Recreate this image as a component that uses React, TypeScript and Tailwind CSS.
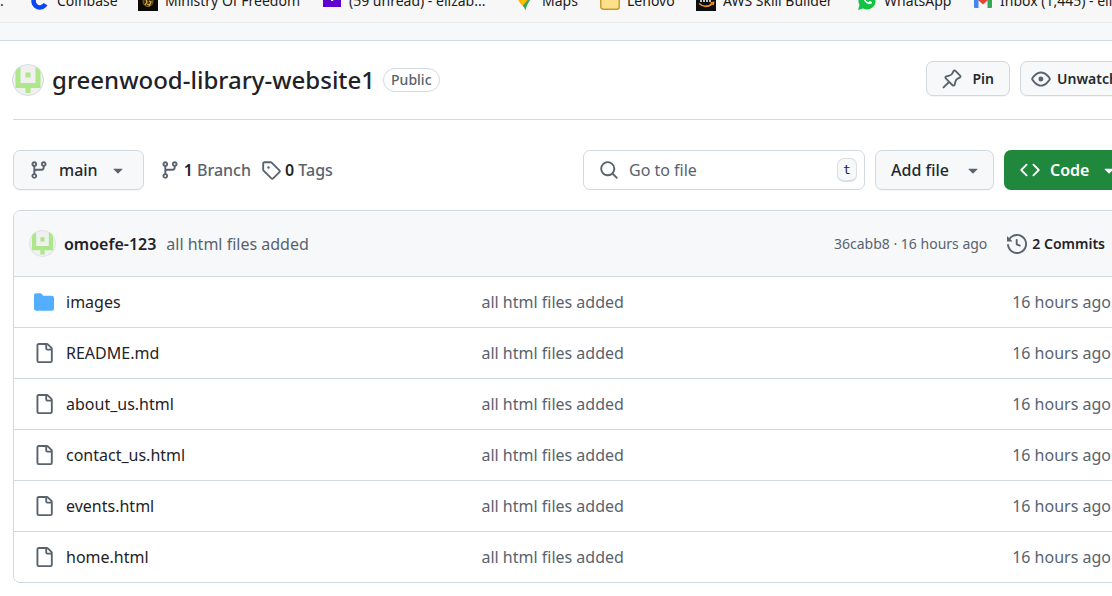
import React from "react";

const paths = {
  branch:
    "M9.5 3.25a2.25 2.25 0 1 1 3 2.122V6A2.5 2.5 0 0 1 10 8.5H6a1 1 0 0 0-1 1v1.128a2.251 2.251 0 1 1-1.5 0V5.372a2.25 2.25 0 1 1 1.5 0v1.836A2.493 2.493 0 0 1 6 7h4a1 1 0 0 0 1-1v-.628A2.25 2.25 0 0 1 9.5 3.25Zm-6 0a.75.75 0 1 0 1.5 0 .75.75 0 0 0-1.5 0Zm8.25-.75a.75.75 0 1 0 0 1.5.75.75 0 0 0 0-1.5ZM4.25 12a.75.75 0 1 0 0 1.5.75.75 0 0 0 0-1.5Z",
  tag: "M1 7.775V2.75C1 1.784 1.784 1 2.75 1h5.025c.464 0 .91.184 1.238.513l6.25 6.25a1.75 1.75 0 0 1 0 2.474l-5.026 5.026a1.75 1.75 0 0 1-2.474 0l-6.25-6.25A1.752 1.752 0 0 1 1 7.775Zm1.5 0c0 .066.026.13.073.177l6.25 6.25a.25.25 0 0 0 .354 0l5.025-5.025a.25.25 0 0 0 0-.354l-6.25-6.25a.25.25 0 0 0-.177-.073H2.75a.25.25 0 0 0-.25.25ZM6 5a1 1 0 1 1 0 2 1 1 0 0 1 0-2Z",
  search:
    "M10.68 11.74a6 6 0 0 1-7.922-8.982 6 6 0 0 1 8.982 7.922l3.04 3.04a.749.749 0 0 1-.326 1.275.749.749 0 0 1-.734-.215ZM11.5 7a4.499 4.499 0 1 0-8.997 0A4.499 4.499 0 0 0 11.5 7Z",
  eye: "M8 2c1.981 0 3.671.992 4.933 2.078 1.27 1.091 2.187 2.345 2.637 3.023a1.62 1.62 0 0 1 0 1.798c-.45.678-1.367 1.932-2.637 3.023C11.67 13.008 9.981 14 8 14c-1.981 0-3.671-.992-4.933-2.078C1.797 10.83.88 9.576.43 8.898a1.62 1.62 0 0 1 0-1.798c.45-.677 1.367-1.931 2.637-3.022C4.33 2.992 6.019 2 8 2ZM1.679 7.932a.12.12 0 0 0 0 .136c.411.622 1.241 1.75 2.366 2.717C5.176 11.758 6.527 12.5 8 12.5c1.473 0 2.825-.742 3.955-1.715 1.124-.967 1.954-2.096 2.366-2.717a.12.12 0 0 0 0-.136c-.412-.621-1.242-1.75-2.366-2.717C10.824 4.242 9.473 3.5 8 3.5c-1.473 0-2.825.742-3.955 1.715-1.124.967-1.954 2.096-2.366 2.717ZM8 10a2 2 0 1 1-.001-3.999A2 2 0 0 1 8 10Z",
  code: "m11.28 3.22 4.25 4.25a.75.75 0 0 1 0 1.06l-4.25 4.25a.749.749 0 0 1-1.275-.326.749.749 0 0 1 .215-.734L13.94 8l-3.72-3.72a.749.749 0 0 1 .326-1.275.749.749 0 0 1 .734.215Zm-6.56 0a.751.751 0 0 1 1.042.018.751.751 0 0 1 .018 1.042L2.06 8l3.72 3.72a.749.749 0 0 1-.326 1.275.749.749 0 0 1-.734-.215L.47 8.53a.75.75 0 0 1 0-1.06Z",
  history:
    "m.427 1.927 1.215 1.215a8.002 8.002 0 1 1-1.6 5.685.75.75 0 1 1 1.493-.154 6.5 6.5 0 1 0 1.18-4.458l1.358 1.358A.25.25 0 0 1 3.896 6H.25A.25.25 0 0 1 0 5.75V2.104a.25.25 0 0 1 .427-.177ZM7.75 4a.75.75 0 0 1 .75.75v2.992l2.028.812a.75.75 0 0 1-.557 1.392l-2.5-1A.751.751 0 0 1 7 8.25v-3.5A.75.75 0 0 1 7.75 4Z",
  file: "M2 1.75C2 .784 2.784 0 3.75 0h6.586c.464 0 .909.184 1.237.513l2.914 2.914c.329.328.513.773.513 1.237v9.586A1.75 1.75 0 0 1 13.25 16h-9.5A1.75 1.75 0 0 1 2 14.25Zm1.75-.25a.25.25 0 0 0-.25.25v12.5c0 .138.112.25.25.25h9.5a.25.25 0 0 0 .25-.25V6h-2.75A1.75 1.75 0 0 1 9 4.25V1.5Zm6.75.062V4.25c0 .138.112.25.25.25h2.688l-.011-.013-2.914-2.914-.013-.011Z",
  folder:
    "M1.75 1A1.75 1.75 0 0 0 0 2.75v10.5C0 14.216.784 15 1.75 15h12.5A1.75 1.75 0 0 0 16 13.25v-8.5A1.75 1.75 0 0 0 14.25 3H7.5a.25.25 0 0 1-.2-.1l-.9-1.2C6.07 1.26 5.55 1 5 1H1.75Z",
  caret:
    "m4.427 7.427 3.396 3.396a.25.25 0 0 0 .354 0l3.396-3.396A.25.25 0 0 0 11.396 7H4.604a.25.25 0 0 0-.177.427Z",
  pin: "m11.294.984 3.722 3.722a1.75 1.75 0 0 1-.504 2.826l-1.327.613a3.089 3.089 0 0 0-1.707 2.084l-.584 2.454c-.317 1.332-1.972 1.8-2.94.832L5.75 11.311 1.78 15.28a.749.749 0 1 1-1.06-1.06l3.969-3.97-2.204-2.204c-.968-.968-.5-2.623.832-2.94l2.454-.584a3.08 3.08 0 0 0 2.084-1.707l.613-1.327a1.75 1.75 0 0 1 2.826-.504ZM6.283 9.723l2.732 2.731a.25.25 0 0 0 .42-.119l.584-2.454a4.586 4.586 0 0 1 2.537-3.098l1.328-.613a.25.25 0 0 0 .072-.404l-3.722-3.722a.25.25 0 0 0-.404.072l-.613 1.328a4.584 4.584 0 0 1-3.098 2.537l-2.454.584a.25.25 0 0 0-.119.42l2.731 2.732Z",
};

function Icon({ name, className = "text-[#59636e]" }: { name: keyof typeof paths; className?: string }) {
  return (
    <svg viewBox="0 0 16 16" aria-hidden="true" className={`size-5 shrink-0 fill-current ${className}`}>
      <path d={paths[name]} />
    </svg>
  );
}

function Avatar({ className }: { className: string }) {
  return (
    <svg viewBox="0 0 32 32" aria-hidden="true" className={`shrink-0 rounded-full ${className}`}>
      <rect width="32" height="32" fill="#f0f0f0" />
      <path d="M3.500 3h5v16h15V3h5v21h-10v5h-5v-5h-10z" fill="#aee68a" />
      <path d="M13.500 8.500h5v5h-5z" fill="#aee68a" />
      <circle cx="16" cy="16" r="15.500" fill="none" stroke="#d9dde0" />
    </svg>
  );
}

const bookmarks = [
  {
    label: "Coinbase",
    width: "w-[108px]",
    icon: (
      <path d="M15.500 13.200a6.400 6.400 0 1 1 0-6.400" fill="none" stroke="#0a46f5" strokeWidth="4.500" />
    ),
  },
  {
    label: "Ministry Of Freedom",
    width: "w-[184px]",
    icon: (
      <>
        <rect width="20" height="20" fill="#0b0a06" />
        <circle cx="10" cy="10.500" r="5" fill="#3d2e08" stroke="#8a6b1c" />
        <path d="M7 14l2-3-1-2m3 6 2-4-2-1m-2 3 3 1" fill="none" stroke="#d8ae45" strokeWidth="1.300" />
      </>
    ),
  },
  {
    label: "(59 unread) - elizab...",
    width: "w-[193px]",
    icon: (
      <>
        <path d="M1 0h18v16H1z" fill="#6001d2" />
        <path d="M9 8h3l-1 2H9z" fill="#fff" />
      </>
    ),
  },
  {
    label: "Maps",
    width: "w-[85px]",
    icon: (
      <>
        <path d="M3 8c1 4 3.500 5 5.500 8L15 6V0H3z" fill="#fbbc04" />
        <path d="M17 3c0 6-5 8-6.500 16.500C10 18 9.500 17 8 14.500L16 5z" fill="#34a853" />
      </>
    ),
  },
  {
    label: "Lenovo",
    width: "w-[96px]",
    icon: <rect x=".75" y="1" width="18.500" height="17.250" rx="2.500" fill="#ffe08a" stroke="#c69a2c" strokeWidth="1.400" />,
  },
  {
    label: "AWS Skill Builder",
    width: "w-[161px]",
    icon: (
      <>
        <rect width="20" height="20" fill="#0c0d10" />
        <path d="M5 7v4m3-4v4m3-4v4m3-4v4" stroke="#fff" strokeWidth="1.500" />
        <path d="M3 12.500c4 3.500 9 3.500 13 .5m1 1 .5-2.500-3 .5" fill="none" stroke="#f29222" strokeWidth="1.600" />
      </>
    ),
  },
  {
    label: "WhatsApp",
    width: "w-[116px]",
    icon: (
      <>
        <path d="M1 19l1.500-5A8.500 8.500 0 1 1 6 17.500z" fill="#12c244" />
        <path
          d="M6.500 5.500c-1 4 3.500 8.500 7.500 7.500 1-.5 1.200-1.500.8-2l-2-1-1.300 1.200C10 10.800 9 9.800 8.500 8.500L9.500 7 8.500 5z"
          fill="#fff"
        />
      </>
    ),
  },
  {
    label: "Inbox (1,445) - elizab...",
    width: "w-[184px]",
    icon: (
      <>
        <path d="M1 4h4.500v13H2a1 1 0 0 1-1-1z" fill="#4285f4" />
        <path d="M14.500 4H19v12a1 1 0 0 1-1 1h-3.500z" fill="#34a853" />
        <path d="M5.500 4 10 8l4.500-4v5.500L10 13.500l-4.500-4z" fill="#ea4335" />
      </>
    ),
  },
];

const files = ["images", "README.md", "about_us.html", "contact_us.html", "events.html", "home.html"];

const button =
  "flex items-center rounded-[7px] border border-[#d1d9e0] bg-[#f6f8fa] text-[#25292e] shadow-[0_1px_0_rgba(31,35,40,0.04)]";

export default function App() {
  return (
    <div className="min-h-screen overflow-x-hidden bg-white font-['Noto_Sans','Open_Sans',sans-serif] text-base text-[#1f2328]">
      <nav
        aria-label="Bookmarks"
        className="flex h-[23px] items-end overflow-hidden border-b border-[#e6eaec] bg-[#f7f7f7] pb-[11px] text-sm text-[#1b1b1b]"
      >
        <span className="w-[30px] shrink-0 leading-5">.</span>
        {bookmarks.map((b) => (
          <a key={b.label} href="#" className={`flex h-5 shrink-0 items-center gap-[7px] whitespace-nowrap leading-5 ${b.width}`}>
            <svg viewBox="0 0 20 20" aria-hidden="true" className="size-5 shrink-0">
              {b.icon}
            </svg>
            {b.label}
          </a>
        ))}
      </nav>
      <div className="h-[18px] border-b border-[#d1d9e0] bg-[#f6f8fa]" />

      <main className="-mr-4 pl-[13px]">
        <header className="flex h-[79px] items-center gap-2 border-b border-[#d1d9e0]">
          <Avatar className="-ml-px size-8" />
          <h1 className="text-2xl font-medium">
            <a href="#">greenwood-library-website1</a>
          </h1>
          <span className="rounded-full border border-[#d1d9e0] px-[7px] text-sm leading-[22px] font-medium text-[#59636e]">Public</span>
          <div className="mt-5 ml-auto flex gap-2.5 self-start text-sm font-semibold">
            <button className={`${button} h-[35px] gap-2.5 px-[15px]`}>
              <Icon name="pin" />
              Pin
            </button>
            <button className={`${button} h-[35px] w-[108px] gap-1.5 px-2.5`}>
              <Icon name="eye" />
              Unwatch
            </button>
          </div>
        </header>

        <div className="mt-[30px] flex h-10 items-stretch gap-2.5">
          <button className={`${button} gap-2.5 px-[15px] font-medium`}>
            <Icon name="branch" />
            main
            <Icon name="caret" />
          </button>
          <a href="#" className="ml-1.5 flex items-center gap-1 font-medium text-[#59636e]">
            <Icon name="branch" />
            <span>
              <strong className="font-semibold text-[#1f2328]">1</strong> Branch
            </span>
          </a>
          <a href="#" className="flex items-center gap-1 font-medium text-[#59636e]">
            <Icon name="tag" />
            <span>
              <strong className="font-semibold text-[#1f2328]">0</strong> Tags
            </span>
          </a>
          <label className="ml-auto flex w-[282px] items-center gap-2.5 rounded-[7px] border border-[#d1d9e0] pr-[7px] pl-[15px]">
            <Icon name="search" />
            <input
              aria-label="Go to file"
              placeholder="Go to file"
              className="min-w-0 flex-1 bg-transparent outline-none placeholder:text-[#59636e]"
            />
            <kbd className="flex h-6 w-5 items-center justify-center rounded-[7px] border border-b-2 border-[#d9dfe4] bg-[#f6f8fa] font-['DejaVu_Sans_Mono',monospace] text-[13px]">
              t
            </kbd>
          </label>
          <button className={`${button} w-[119px] justify-between pr-2.5 pl-[15px] font-medium`}>
            Add file
            <Icon name="caret" />
          </button>
          <button className="flex w-[124px] items-center gap-2.5 rounded-[7px] bg-[#1f883d] pl-4 font-semibold text-white">
            <Icon name="code" className="text-white" />
            Code
            <Icon name="caret" className="text-white" />
          </button>
        </div>

        <section className="mt-5 mb-3.5 overflow-hidden rounded-[7px] border border-[#d1d9e0]">
          <div className="flex h-[66px] items-center border-b border-[#d1d9e0] bg-[#f6f8fa] pr-[22px] pl-[15px]">
            <Avatar className="size-[27px]" />
            <a href="#" className="ml-2 font-semibold">
              omoefe-123
            </a>
            <a href="#" className="ml-2.5 text-[#59636e]">
              all html files added
            </a>
            <span className="ml-auto text-sm text-[#59636e]">36cabb8 · 16 hours ago</span>
            <a href="#" className="ml-5 flex items-center gap-[5px] text-sm font-semibold">
              <Icon name="history" />2 Commits
            </a>
          </div>
          <table className="w-full table-fixed border-separate border-spacing-0 text-left">
            <tbody className="[&>tr:last-child>td]:h-[50px] [&>tr:last-child>td]:border-0">
              {files.map((name) => (
                <tr key={name}>
                  <td className="h-[51px] w-[42%] border-b border-[#d1d9e0] pl-5">
                    <a href="#" className="flex items-center gap-3">
                      {name === "images" ? (
                        <Icon name="folder" className="text-[#54aeff]" />
                      ) : (
                        <Icon name="file" />
                      )}
                      {name}
                    </a>
                  </td>
                  <td className="border-b border-[#d1d9e0] text-[#59636e]">
                    <a href="#">all html files added</a>
                  </td>
                  <td className="w-40 border-b border-[#d1d9e0] pr-4 text-right text-[#59636e]">16 hours ago</td>
                </tr>
              ))}
            </tbody>
          </table>
        </section>
      </main>
    </div>
  );
}
